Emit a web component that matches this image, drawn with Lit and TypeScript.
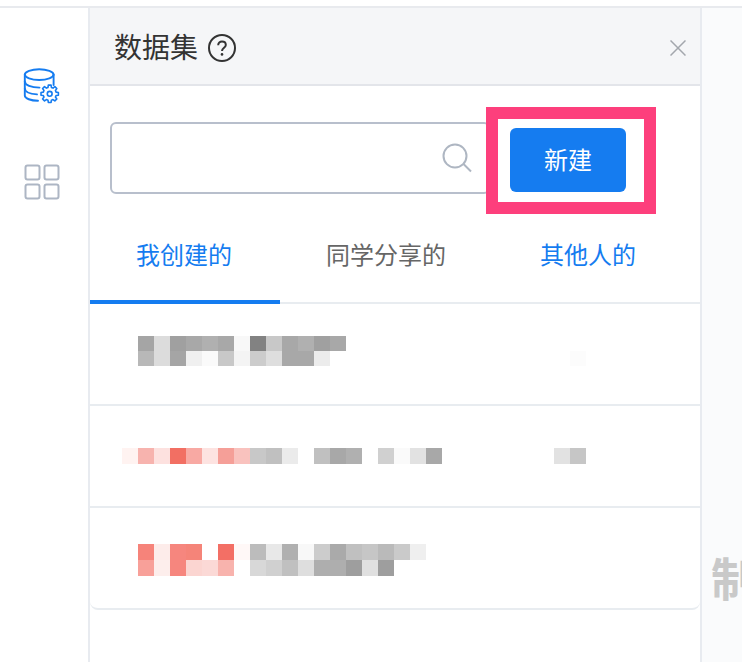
import { LitElement, html, css } from "lit";
import { customElement } from "lit/decorators.js";

const _ = "";
const rows: { pad: number; top: number; h: number; cells: string[][] }[] = [
  {
    pad: 48,
    top: 32,
    h: 15,
    cells: [
      ["#a5a5a5","#dcdcdc","#a0a0a0","#a8a8a8","#b0b0b0","#a8a8a8","#f8f8f8","#828282","#c8c8c8","#a8a8a8","#b0b0b0","#a0a0a0","#a8a8a8"],
      ["#b8b8b8","#dcdcdc","#a5a5a5","#f0f0f0","#fafafa","#c8c8c8","#f4f4f4","#cccccc","#dedede","#a8a8a8","#a8a8a8","#ececec",_,_,_,_,_,_,_,_,_,_,_,_,_,_,_,"#fcfcfc"],
    ],
  },
  {
    pad: 32,
    top: 42,
    h: 16,
    cells: [
      ["#fff3f1","#f7b3ae","#fde1df","#f26f63","#f8a9a3","#fde3e1","#f59f98","#f9c2be","#c8c8c8","#c0c0c0","#ebebeb",_,"#c0c0c0","#a8a8a8","#b0b0b0",_,"#d0d0d0","#fafafa","#e2e2e2","#a8a8a8",_,_,_,_,_,_,_,"#e2e2e2","#c6c6c6"],
    ],
  },
  {
    pad: 48,
    top: 36,
    h: 16,
    cells: [
      ["#f6837a","#fdecea","#f6867e","#f58479",_,"#f36f65","#fff8f7","#bcbcbc","#e8e8e8","#b0b0b0","#f8f8f8","#cccccc","#aaaaaa","#c0c0c0","#c6c6c6","#bababa","#cacaca","#efefef"],
      ["#f8a099","#fdeeec","#f6867e","#fbd5d1","#fbd9d6","#f8b3ad",_,"#d8d8d8","#d0d0d0","#c0c0c0","#dedede","#aeaeae","#aeaeae","#9e9e9e","#e0e0e0","#9e9e9e"],
    ],
  },
];

/* outline of an eight-toothed gear, in the icon's own coordinates */
function gearPath(cx: number, cy: number, inner: number, outer: number): string {
  const pts: string[] = [];
  const pt = (r: number, deg: number) => {
    const a = (deg * Math.PI) / 180;
    return `${(cx + r * Math.cos(a)).toFixed(2)} ${(cy + r * Math.sin(a)).toFixed(2)}`;
  };
  for (let i = 0; i < 8; i++) {
    const c = i * 45;
    pts.push(pt(inner, c - 15), pt(outer, c - 9), pt(outer, c + 9), pt(inner, c + 15));
  }
  return "M" + pts.join("L") + "Z";
}

@customElement("app-root")
export class AppRoot extends LitElement {
  static styles = css`
    :host {
      display: block;
      width: 742px;
      height: 662px;
      overflow: hidden;
      background: #fff;
      font-family: "Noto Sans CJK SC", "Noto Sans", sans-serif;
      color: #333;
    }
    .page {
      margin-top: 6px;
      height: 656px;
      box-sizing: border-box;
      border-top: 2px solid #e8eaee;
      display: flex;
    }
    .side {
      width: 90px;
      flex: none;
      box-sizing: border-box;
      border-right: 2px solid #e8ebf0;
      padding: 58px 0 0 22px;
      display: flex;
      flex-direction: column;
      gap: 55px;
    }
    .side svg { display: block; }
    .panel {
      width: 612px;
      flex: none;
      box-sizing: border-box;
      border-right: 2px solid #e8ebf0;
      position: relative;
      display: flex;
      flex-direction: column;
    }
    .head {
      height: 78px;
      flex: none;
      box-sizing: border-box;
      background: #f5f6f8;
      border-bottom: 2px solid #e3e5ea;
      display: flex;
      align-items: center;
      padding: 4px 14px 0 24px;
    }
    .title {
      font-size: 28px;
      line-height: 40px;
      color: #333;
      margin-bottom: 4px;
    }
    .help { margin-left: 10px; display: block; }
    .close { margin-left: auto; display: block; }
    .tools {
      display: flex;
      gap: 20px;
      padding: 36px 0 0 20px;
      height: 126px;
      box-sizing: border-box;
      flex: none;
    }
    .search {
      width: 380px;
      height: 72px;
      box-sizing: border-box;
      border: 2px solid #b8bfcc;
      border-radius: 6px;
      display: flex;
      align-items: center;
      padding-left: 330px;
    }
    .search svg { display: block; }
    .btn {
      width: 116px;
      height: 64px;
      margin-top: 6px;
      box-sizing: border-box;
      padding-bottom: 4px;
      background: #157cf0;
      border-radius: 6px;
      color: #fff;
      font-size: 24px;
      display: flex;
      align-items: center;
      justify-content: center;
    }
    .mark {
      position: absolute;
      left: 396px;
      top: 99px;
      width: 170px;
      height: 107px;
      box-sizing: border-box;
      border: 12px solid #fd3f7c;
      pointer-events: none;
    }
    .tabs {
      display: flex;
      height: 92px;
      flex: none;
      box-sizing: border-box;
      border-bottom: 2px solid #e8ecf0;
    }
    .tab {
      padding: 0 48px 0 46px;
      height: 92px;
      box-sizing: border-box;
      font-size: 24px;
      line-height: 84px;
      white-space: nowrap;
      color: #157cf0;
      border-bottom: 4px solid transparent;
    }
    .tab.active { border-bottom-color: #157cf0; }
    .tab.plain { color: #666; }
    .list { display: flex; flex-direction: column; }
    .row {
      height: 102px;
      box-sizing: border-box;
      border-bottom: 2px solid #e8ecf0;
    }
    .row:last-child { border-radius: 0 0 8px 8px; }
    .mosaic { filter: blur(0.6px); }
    .line { display: flex; }
    .cell { width: 16px; flex: none; }
    .stage {
      flex: 1;
      min-width: 0;
      background: #fafbfc;
      overflow: hidden;
      padding: 538px 0 0 9px;
    }
    .stage span {
      display: block;
      white-space: nowrap;
      font-size: 46px;
      line-height: 60px;
      font-weight: 700;
      color: #c9c9c9;
    }
  `;

  private dbIcon() {
    return html`<svg width="40" height="40" viewBox="0 0 40 40" fill="none" stroke="#157cf0" stroke-width="1.9" stroke-linecap="round" stroke-linejoin="round">
      <ellipse cx="17.2" cy="8.6" rx="14.4" ry="5.4"></ellipse>
      <path d="M2.8 8.6V29.5C2.8 32.6 9 34.6 16 34.8"></path>
      <path d="M31.6 8.6V19"></path>
      <path d="M2.8 15.5C3 19 9 21.6 17.5 21.6"></path>
      <path d="M2.8 22.5C3 25.8 8 28 15 28.4"></path>
      <path d=${gearPath(27.7, 27.8, 6.6, 8.8)} stroke-width="1.6"></path>
      <circle cx="27.7" cy="27.8" r="2.4" stroke-width="1.6"></circle>
    </svg>`;
  }

  private gridIcon() {
    return html`<svg width="40" height="40" viewBox="0 0 40 40" fill="none" stroke="#adb6c4" stroke-width="2">
      <rect x="3.5" y="4.5" width="14" height="14" rx="2"></rect>
      <rect x="22.5" y="4.5" width="14" height="14" rx="2"></rect>
      <rect x="3.5" y="23.5" width="14" height="14" rx="2"></rect>
      <rect x="22.5" y="23.5" width="14" height="14" rx="2"></rect>
    </svg>`;
  }

  render() {
    return html`
      <div class="page">
        <nav class="side">${this.dbIcon()}${this.gridIcon()}</nav>
        <section class="panel">
          <header class="head">
            <span class="title">数据集</span>
            <svg class="help" width="28" height="28" viewBox="0 0 28 28" fill="none" stroke="#333" stroke-width="2">
              <circle cx="14" cy="14" r="13"></circle>
              <path d="M10.2 11.2C10.2 8.9 11.9 7.6 14 7.6C16.1 7.6 17.8 8.9 17.8 10.9C17.8 13.6 14 13.8 14 17"></path>
              <circle cx="14" cy="20.4" r="1.3" fill="#333" stroke="none"></circle>
            </svg>
            <svg class="close" width="16" height="16" viewBox="0 0 16 16" fill="none" stroke="#a3a7ad" stroke-width="1.5">
              <path d="M0.5 0.5L15.5 15.5M15.5 0.5L0.5 15.5"></path>
            </svg>
          </header>
          <div class="tools">
            <div class="search">
              <svg width="32" height="32" viewBox="0 0 32 32" fill="none" stroke="#aeb6c2" stroke-width="2">
                <circle cx="13" cy="14" r="11.5"></circle>
                <path d="M21.5 22L29 29.5"></path>
              </svg>
            </div>
            <div class="btn">新建</div>
          </div>
          <div class="mark"></div>
          <div class="tabs">
            <div class="tab active">我创建的</div>
            <div class="tab plain">同学分享的</div>
            <div class="tab">其他人的</div>
          </div>
          <div class="list">
            ${rows.map(
              (r) => html`<div class="row" style="padding:${r.top}px 0 0 ${r.pad}px">
                <div class="mosaic">
                  ${r.cells.map(
                    (line) => html`<div class="line">
                      ${line.map((c) => html`<div class="cell" style="height:${r.h}px;background:${c || "transparent"}"></div>`)}
                    </div>`
                  )}
                </div>
              </div>`
            )}
          </div>
        </section>
        <aside class="stage"><span>制作</span></aside>
      </div>
    `;
  }
}
